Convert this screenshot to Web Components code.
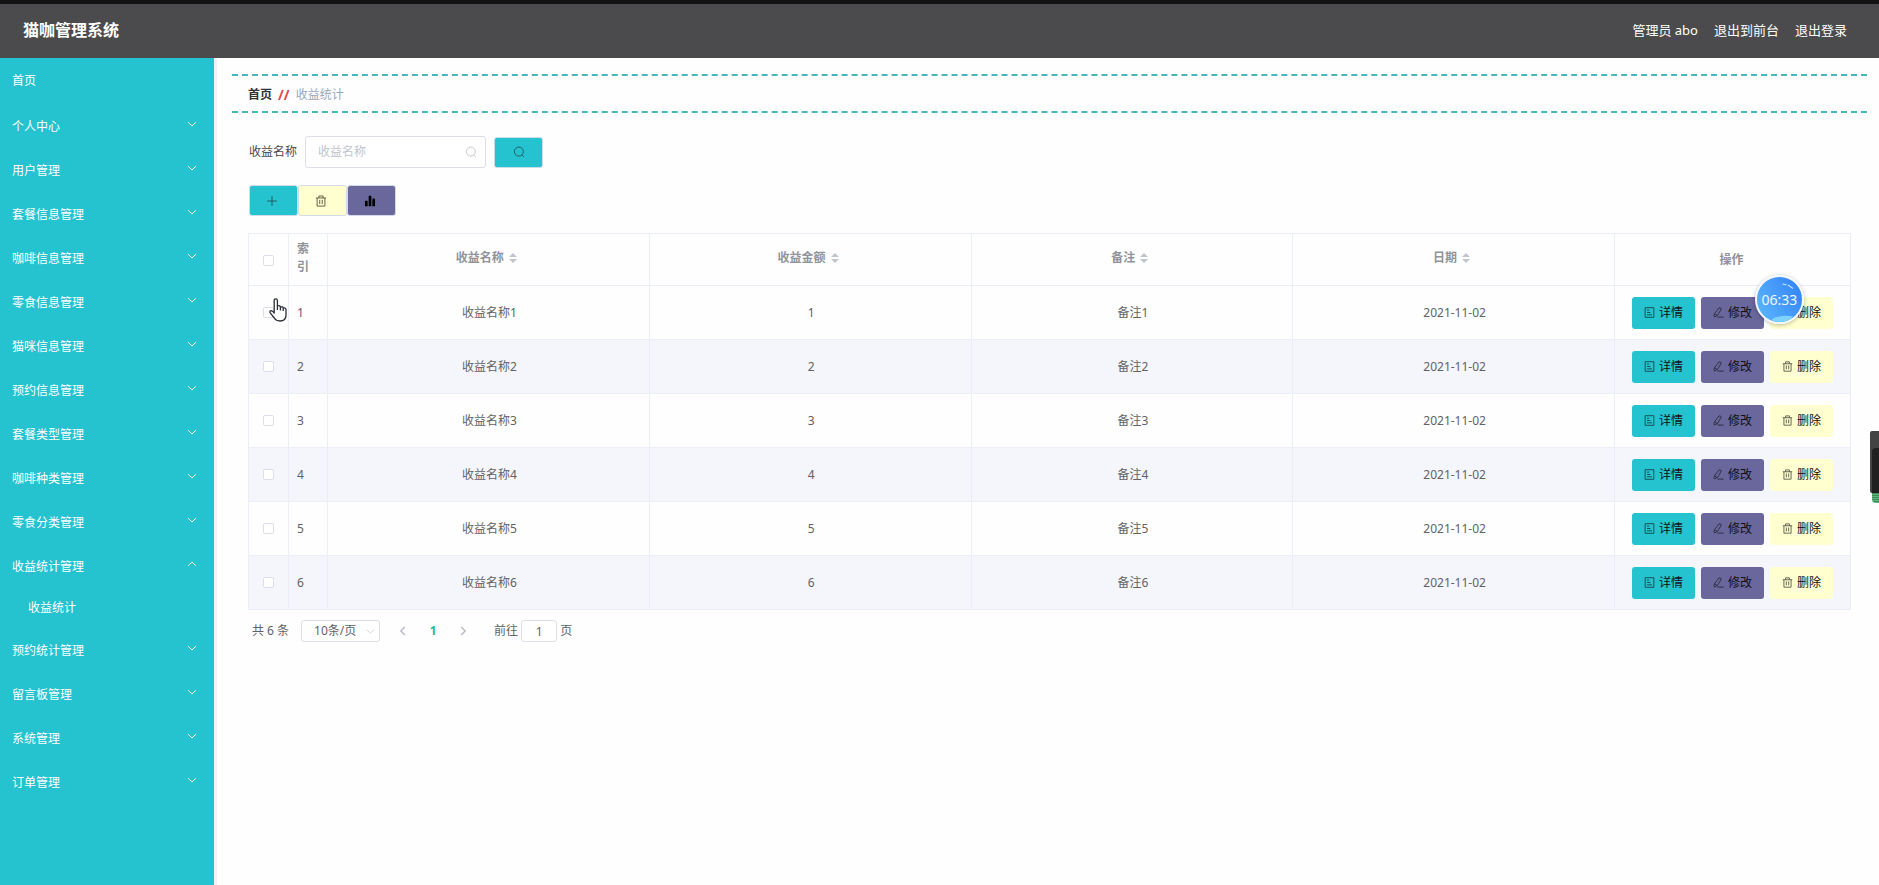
<!DOCTYPE html>
<html lang="zh-CN">
<head>
<meta charset="utf-8">
<title>猫咖管理系统</title>
<style>
  html, body { margin: 0; min-height: 100%; background: #fefefe; }
  body { font: 12px/20px "Noto Sans", "Noto Sans CJK SC", sans-serif; color: #606266; }
</style>
</head>
<body>
<admin-app></admin-app>
<script>
const ICONS = {
  search: '<circle cx="7.8" cy="7.4" r="6"/><path d="M12 11.8l2.4 2.6"/>',
  plus: '<path d="M8 1.5v13M1.5 8h13"/>',
  trash: '<path d="M1.2 4h13.6M5.2 4V1.3h5.6V4M2.8 4v10.8h10.4V4M6.3 6.5v5.6M9.7 6.5v5.6"/>',
  chart: '<path fill="currentColor" stroke="none" d="M1.3 8.5q0-1 1-1h1.6q1 0 1 1V15H1.3zM6.2 2q0-1 1-1h1.6q1 0 1 1v13H6.2zM11.1 5.5q0-1 1-1h1.6q1 0 1 1V15h-3.6z"/>',
  doc: '<path d="M1.7 1h12.6v14H1.7zM4.4 4.6h3.2M4.4 8h5M4.400 11.400h7.2"/>',
  edit: '<path d="M8.800 1.300q2.800-.4 3.200 1.700L6.600 12.300l-4.600 2.200q-1-2.500.400-5zM6.500 14.700H15.500M2.400 10l3.900 2.300"/>',
  down: '<path d="M1.5 5L8 11l6.5-6"/>',
  up: '<path d="M1.5 11L8 5l6.5 6"/>',
  left: '<path d="M11 1.5L4.5 8l6.5 6.5"/>',
  right: '<path d="M5 1.5L11.5 8 5 14.5"/>'
};

class AppIcon extends HTMLElement {
  connectedCallback() {
    const root = this.attachShadow({ mode: 'open' });
    root.innerHTML = `<style>
      :host { display: inline-flex; width: 12px; height: 12px; flex: none; }
      svg { width: 100%; height: 100%; fill: none; stroke: currentColor; stroke-width: var(--stroke, 1.2); }
    </style><svg viewBox="0 0 16 16" aria-hidden="true">${ICONS[this.getAttribute('name')]}</svg>`;
  }
}

class AppHeader extends HTMLElement {
  connectedCallback() {
    this.attachShadow({ mode: 'open' }).innerHTML = `<style>
      :host { display: flex; align-items: center; justify-content: space-between; box-sizing: border-box; height: 58px;
        border-top: 4px solid #121212; padding: 0 32px 2px 23px; background: #4b4b4d; color: #fff; }
      h1 { margin: 0; font-size: 16px; line-height: 24px; }
      nav { display: flex; gap: 16px; font-size: 13px; }
      a { color: inherit; text-decoration: none; }
    </style>
    <h1><slot></slot></h1>
    <nav><span>管理员 abo</span><a href="#front">退出到前台</a><a href="#logout">退出登录</a></nav>`;
  }
}

class SideMenu extends HTMLElement {
  connectedCallback() {
    const groups = ['个人中心', '用户管理', '套餐信息管理', '咖啡信息管理', '零食信息管理', '猫咪信息管理', '预约信息管理',
      '套餐类型管理', '咖啡种类管理', '零食分类管理', '收益统计管理', '预约统计管理', '留言板管理', '系统管理', '订单管理'];
    this.attachShadow({ mode: 'open' }).innerHTML = `<style>
      :host { display: block; background: #25c2cf; border-right: 3px solid #f0f0f6; color: #fff; }
      a, button { display: flex; align-items: center; justify-content: space-between; box-sizing: border-box;
        width: 100%; height: 44px; padding: 2px 17px 0 12px; border: 0; background: none;
        color: inherit; font: inherit; text-decoration: none; text-align: left; }
      .home { margin-bottom: 2px; }
      .sub { height: 40px; padding: 0 17px 0 28px; }
      app-icon { width: 10px; height: 10px; margin-bottom: 6px; --stroke: 1.6; }
    </style>
    <nav><a class="home" href="#home">首页</a>${groups.map(g => {
      const open = g === '收益统计管理';
      return `<button type="button" aria-expanded="${open}">${g}<app-icon name="${open ? 'up' : 'down'}"></app-icon></button>` +
        (open ? '<a class="sub" href="#income">收益统计</a>' : '');
    }).join('')}</nav>`;
  }
}

class CrumbBar extends HTMLElement {
  connectedCallback() {
    this.attachShadow({ mode: 'open' }).innerHTML = `<style>
      :host { display: flex; align-items: center; box-sizing: border-box; height: 39px; padding: 2px 0 0 16px;
        border-top: 2px dashed #47b6bd; border-bottom: 2px dashed #47b6bd; color: #97a8be; }
      a { color: #303133; font-weight: 700; text-decoration: none; }
      b { margin: 0 6px; color: #e04a4a; font-size: 14px; }
    </style><a href="#home">首页</a><b>//</b><span><slot></slot></span>`;
  }
}

class SearchForm extends HTMLElement {
  connectedCallback() {
    this.attachShadow({ mode: 'open' }).innerHTML = `<style>
      :host { display: block; }
      form { display: flex; align-items: center; }
      label { margin-right: 8px; color: #48484c; }
      .box { display: flex; align-items: center; box-sizing: border-box; width: 181px; height: 32px; margin-right: 8px;
        padding: 0 8px 0 12px; border: 1px solid #dcdfe6; border-radius: 3px; background: #fff; color: #c0c4cc; }
      input { flex: 1; min-width: 0; border: 0; padding: 0; outline: 0; background: none; font: inherit; color: #606266; }
      input::placeholder { color: #c0c4cc; opacity: 1; }
      button { display: flex; align-items: center; justify-content: center; width: 49px; height: 31px; padding: 0;
        border: 1px solid #c9dfe6; border-radius: 3px; background: #25c2cf; color: #24545a; }
    </style>
    <form><label for="name">收益名称</label>
      <span class="box"><input id="name" type="text" placeholder="收益名称"><app-icon name="search"></app-icon></span>
      <button type="button" aria-label="查询"><app-icon name="search"></app-icon></button></form>`;
  }
}

class ToolBar extends HTMLElement {
  connectedCallback() {
    this.attachShadow({ mode: 'open' }).innerHTML = `<style>
      :host { display: flex; }
      button { display: flex; align-items: center; justify-content: center; width: 49px; height: 31px; padding: 0 4px 0 0;
        border: 1px solid #d3dce6; border-radius: 3px; }
      .add { background: #25c2cf; color: #24545a; }
      .del { background: #ffffcf; color: #55553f; }
      .stat { background: #69679b; color: #000; }
    </style>
    <button class="add" type="button" aria-label="新增"><app-icon name="plus"></app-icon></button>
    <button class="del" type="button" aria-label="删除"><app-icon name="trash"></app-icon></button>
    <button class="stat" type="button" aria-label="统计"><app-icon name="chart"></app-icon></button>`;
  }
}

class RowAction extends HTMLElement {
  connectedCallback() {
    this.attachShadow({ mode: 'open' }).innerHTML = `<style>
      :host { display: block; }
      button { display: flex; align-items: center; justify-content: center; gap: 4px; width: 63px; height: 32px; padding: 0;
        border: 0; border-radius: 3px; font: inherit; color: #101014; background: var(--fill); }
      app-icon { width: 11px; height: 11px; opacity: .75; }
    </style><button type="button"><app-icon name="${this.getAttribute('icon')}"></app-icon><slot></slot></button>`;
  }
}

class IncomeTable extends HTMLElement {
  connectedCallback() {
    const sort = '<svg class="sort" viewBox="0 0 8 10" aria-hidden="true"><path d="M4 0l4 4H0zM0 6h8l-4 4z"/></svg>';
    const rows = [1, 2, 3, 4, 5, 6].map(n => `<tr>
      <td class="pick"><input type="checkbox" aria-label="选择第${n}行"></td><td class="idx">${n}</td>
      <td>收益名称${n}</td><td>${n}</td><td>备注${n}</td><td>2021-11-02</td>
      <td class="ops"><div class="acts"><row-action class="view" icon="doc">详情</row-action><row-action class="edit" icon="edit">修改</row-action><row-action class="del" icon="trash">删除</row-action></div></td></tr>`).join('');
    this.attachShadow({ mode: 'open' }).innerHTML = `<style>
      :host { display: block; }
      table { width: 100%; table-layout: fixed; border-collapse: collapse; text-align: center; }
      th, td { box-sizing: border-box; padding: 0 0 0 2px; border: 1px solid #ebeef5; }
      th { height: 52px; padding: 0 4px 4px 0; color: #909399; line-height: 18px; }
      td { height: 54px; }
      tbody tr:nth-child(even) { background: #f5f6fc; }
      .c1 { width: 40px; } .c2 { width: 39px; } .c7 { width: 236px; }
      .idx { text-align: left; padding-left: 8px; padding-right: 14px; }
      th.pick { padding: 2px 0 0; }
      th.ops { padding: 0 2px 0 0; }
      td.pick, td.ops { padding: 0; }
      input { appearance: none; display: block; box-sizing: border-box; width: 11px; height: 11px; margin: 0 auto;
        border: 1px solid #dcdfe6; border-radius: 2px; background: #fff; }
      .sort { width: 8px; height: 10px; margin-left: 5px; fill: #c0c4cc; vertical-align: -1px; }
      .acts { display: flex; justify-content: center; gap: 6px; }
      .view { --fill: #25c2cf; } .edit { --fill: #69679b; } .del { --fill: #ffffcf; }
    </style>
    <table><colgroup><col class="c1"><col class="c2"><col><col><col><col><col class="c7"></colgroup>
      <thead><tr><th class="pick"><input type="checkbox" aria-label="全选"></th><th class="idx">索引</th>
      <th>收益名称${sort}</th><th>收益金额${sort}</th><th>备注${sort}</th><th>日期${sort}</th><th class="ops">操作</th></tr></thead>
      <tbody>${rows}</tbody></table>`;
  }
}

class PageBar extends HTMLElement {
  connectedCallback() {
    this.attachShadow({ mode: 'open' }).innerHTML = `<style>
      :host { display: flex; align-items: center; height: 22px; }
      .size { display: flex; position: relative; margin: 0 8px 0 12px; color: #c0c4cc; }
      select { appearance: none; box-sizing: border-box; width: 79px; height: 22px; padding: 0 20px 0 12px;
        border: 1px solid #dcdfe6; border-radius: 3px; background: #fff; color: #606266; font: inherit; line-height: 20px; }
      .size app-icon { position: absolute; right: 5px; top: 7px; width: 9px; height: 9px; }
      button { display: flex; justify-content: center; align-items: center; width: 30px; height: 22px; padding: 0;
        border: 0; background: none; color: #b4b7c0; font: inherit; }
      button app-icon { width: 10px; height: 10px; --stroke: 2; }
      .now { color: #26b99a; font-weight: 700; }
      label { margin: 0 3px 0 16px; }
      input { box-sizing: border-box; width: 36px; height: 22px; margin-right: 3px; padding: 0; border: 1px solid #dcdfe6;
        border-radius: 3px; background: #fff; color: #606266; font: inherit; text-align: center; }
    </style>
    <span>共 6 条</span>
    <span class="size"><select aria-label="每页条数"><option>10条/页</option></select><app-icon name="down"></app-icon></span>
    <button type="button" aria-label="上一页"><app-icon name="left"></app-icon></button>
    <button class="now" type="button">1</button>
    <button type="button" aria-label="下一页"><app-icon name="right"></app-icon></button>
    <label for="page">前往</label><input id="page" type="text" value="1"><span>页</span>`;
  }
}

class ClockBubble extends HTMLElement {
  connectedCallback() {
    this.attachShadow({ mode: 'open' }).innerHTML = `<style>
      :host { position: absolute; top: 275px; right: 75px; display: grid; place-items: center; box-sizing: border-box;
        width: 49px; height: 49px; border: 2px solid #f4f8ff; border-radius: 50%; overflow: hidden;
        background: linear-gradient(60deg, #5cb9fb, #3280fb); box-shadow: 0 1px 4px #0004; color: #eef6ff; font-size: 14px; }
      svg, span { grid-area: 1 / 1; }
      svg { width: 45px; height: 45px; }
    </style>
    <svg viewBox="0 0 45 45" aria-hidden="true"><path d="M15 42Q26 37 36 39.500L32 45H16z" fill="#7fd2fb"/>
      <path d="M25.500 7l4 .8M31 8l5 3.500" stroke="#bfe0ff" stroke-width="1.200" fill="none"/></svg>
    <span><slot></slot></span>`;
  }
}

class HandPointer extends HTMLElement {
  connectedCallback() {
    this.attachShadow({ mode: 'open' }).innerHTML = `<style>
      :host { position: absolute; left: 269px; top: 298px; width: 18px; height: 24px; }
      svg { display: block; width: 100%; height: 100%; }
    </style>
    <svg viewBox="0 0 18 24" aria-hidden="true"><path d="M5.2 15V2.6q0-1.8 1.6-1.8t1.6 1.8V8q2.7-.9 3 1 2.5-.7 2.8 1 2.8-.5 2.8 2v5q0 6-6 6-4 0-5.700-3L1 14.600q-.5-1.800 1.200-1.900 1.300 0 3 2.300zM8.400 8v4M11.400 9v3.500M14.200 10v3" fill="#fff" stroke="#2b2d36" stroke-width="1.300" stroke-linejoin="round"/></svg>`;
  }
}

class EdgeWidget extends HTMLElement {
  connectedCallback() {
    this.attachShadow({ mode: 'open' }).innerHTML = `<style>
      :host { position: absolute; right: 0; top: 431px; width: 9px; }
      .body { height: 62px; box-sizing: border-box; padding: 17px 0 0 2px; border-radius: 2px 0 0 2px; background: #434343; }
      .slot { height: 45px; border-radius: 4px 0 0 0; background: #202020; }
      .level { height: 10px; margin-left: 2px; border-radius: 0 0 0 4px;
        background: repeating-linear-gradient(#3f8a58 0 1px, #5cb87a 1px 2px); }
    </style><div class="body"><div class="slot"></div></div><div class="level"></div>`;
  }
}

class AdminApp extends HTMLElement {
  connectedCallback() {
    this.attachShadow({ mode: 'open' }).innerHTML = `<style>
      :host { display: flex; flex-direction: column; min-height: 100vh; position: relative; }
      .body { flex: 1; display: grid; grid-template-columns: 217px minmax(0, 1fr); }
      main { padding: 16px 12px 0 15px; }
      .panel { padding: 23px 16px 0; }
      search-form, tool-bar { margin-left: 1px; }
      tool-bar { margin-top: 17px; margin-bottom: 17px; }
      page-bar { margin: 10px 0 0 4px; }
    </style>
    <app-header>猫咖管理系统</app-header>
    <div class="body"><side-menu></side-menu>
      <main><crumb-bar>收益统计</crumb-bar>
        <div class="panel"><search-form></search-form><tool-bar></tool-bar><income-table></income-table><page-bar></page-bar></div>
      </main></div>
    <clock-bubble>06:33</clock-bubble><hand-pointer></hand-pointer><edge-widget></edge-widget>`;
  }
}

for (const [tag, type] of [['app-icon', AppIcon], ['app-header', AppHeader], ['side-menu', SideMenu], ['crumb-bar', CrumbBar],
  ['search-form', SearchForm], ['tool-bar', ToolBar], ['row-action', RowAction], ['income-table', IncomeTable],
  ['page-bar', PageBar], ['clock-bubble', ClockBubble], ['hand-pointer', HandPointer], ['edge-widget', EdgeWidget],
  ['admin-app', AdminApp]]) customElements.define(tag, type);
</script>
</body>
</html>
